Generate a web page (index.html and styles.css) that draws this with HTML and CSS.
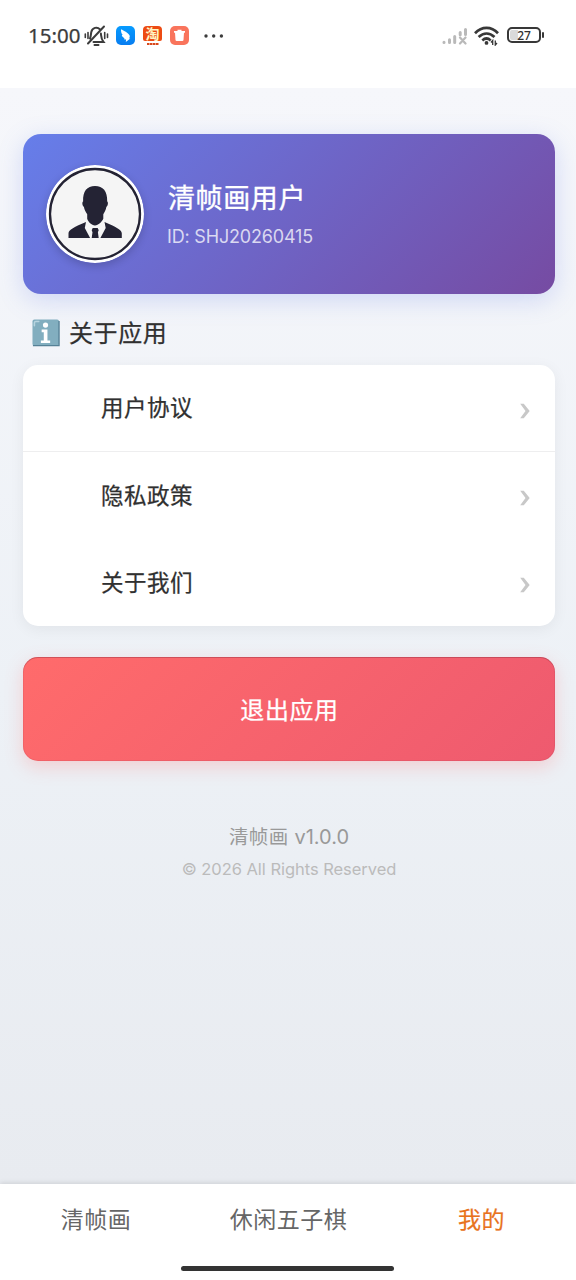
FILE: index.html
```html
<!DOCTYPE html>
<html lang="zh-CN">
<head>
<meta charset="utf-8">
<title>我的</title>
<link rel="stylesheet" href="styles.css">
</head>
<body>
<header class="status">
  <span class="clock">15:00</span>
  <svg class="mute" width="25" height="22" viewBox="0 0 25 22" fill="none" stroke="#3c3c3c" stroke-width="2" stroke-linecap="round">
    <path d="M9.500 17h10c-2.500-3-2.200-5-2.600-8.500M6 13.500c1-2 .8-4 1.300-6.500.9-4.500 6-5.500 8.500-2.800M10.500 20h4M20 1.500L4 18.500"/>
    <path stroke-width="1.600" d="M4 7.500v6M1.300 9v3.500M20.700 7.500v6M23.500 9v3.500"/>
  </svg>
  <svg class="app-bird" width="19" height="19" viewBox="0 0 19 19">
    <defs><linearGradient id="blue" x1="0" y1="0" x2="0" y2="1"><stop offset="0" stop-color="#069bff"/><stop offset="1" stop-color="#087df0"/></linearGradient></defs>
    <rect width="19" height="19" rx="5" fill="url(#blue)"/>
    <path fill="#fff" d="M5 3.200c2.500 1.300 8.200 3.800 8.800 6.800.1 1-.3 1.800-.7 2.500h1.200L9.800 16l.3-2.500-2.300-.3.800-1C6.800 11.300 6 10.200 5.800 9l1 .1C5.500 7.800 4.800 5.300 5 3.200z"/>
  </svg>
  <span class="app-tao"><b>淘</b><i></i></span>
  <svg class="app-bin" width="19" height="19" viewBox="0 0 19 19">
    <rect width="19" height="19" rx="5" fill="#f9745c"/>
    <path fill="#fff" d="M4 5h3.500V3.700h4V5H15v1.700H4zM5 6.500h9l-.5 7.500q-.1 1-1.200 1H6.700q-1.100 0-1.200-1z"/>
  </svg>
  <svg class="dots" width="20" height="4" viewBox="0 0 20 4" fill="#3c3c3c"><circle cx="2" cy="2" r="1.700"/><circle cx="9.700" cy="2" r="1.700"/><circle cx="17.400" cy="2" r="1.700"/></svg>
  <svg class="signal" width="27" height="18" viewBox="0 0 27 18" fill="none" stroke="#b9b9b9" stroke-width="3" stroke-linecap="round">
    <path d="M2 15.200v.3M7.500 12.700v2.800M12.700 9.500v6M18.200 5.500v2.300M23.500 2.500v5"/>
    <path stroke-width="2.200" d="M18 10.500l5.500 6M23.500 10.500l-5.500 6"/>
  </svg>
  <svg class="wifi" width="26" height="20" viewBox="0 0 26 20" fill="none" stroke="#383838" stroke-width="2.700">
    <path d="M1 7.200C7.800.2 17.300.2 24 7.200M4.600 11c5-4.700 11-4.700 15.900 0M8.300 14.400c2.800-2.500 5.600-2.500 8.400 0"/>
    <circle cx="12.500" cy="16.900" r="1.900" fill="#383838" stroke="none"/>
    <path stroke-width="1.300" d="M18.700 19v-4.500l-1.700 2M21.300 14.500V19l1.700-2"/>
  </svg>
  <span class="battery"><span class="level">27</span></span>
</header>

<main class="page">
  <section class="profile">
    <svg class="avatar" width="98" height="98" viewBox="0 0 98 98">
      <circle cx="49" cy="49" r="49" fill="#fff"/>
      <circle cx="49" cy="49" r="45" fill="#f5f5f5" stroke="#242334" stroke-width="2.300"/>
      <path fill="#242334" d="M49 21c8 0 12.500 5 12.200 15.500 1.300.4.800 4.800-.8 5.200-.5 3.300-1.700 5-3.100 7.500v4.600c-1.500 3-4.800 6.700-8.300 6.700s-6.800-3.700-7.800-6.700v-4.600c-1.600-2.500-2.800-4.200-3.300-7.500-1.600-.4-2.100-4.800-.8-5.200C36.700 26 41 21 49 21z"/>
      <path fill="#242334" d="M40 57l-1.200 6 5.300 10H22.500v-4.500c0-3.800 6-6.500 17.500-11.500zM58.500 57l1.200 6-5.300 10h21.400v-4.500c0-3.800-6-6.500-17.300-11.500zM46.700 63h5l1 2.200-.8 2 .8 5.800h-7l.8-5.800-.8-2z"/>
    </svg>
    <div class="who">
      <h1 class="name">清帧画用户</h1>
      <p class="uid">ID: SHJ20260415</p>
    </div>
  </section>

  <h2 class="heading">
    <svg width="28" height="28" viewBox="0 0 29 29">
      <rect x=".5" y=".5" width="27.500" height="27.500" rx="2" fill="#82aebf"/>
      <path d="M1 27.500h27V2" fill="none" stroke="#558196" stroke-width="1.400"/>
      <path d="M2.500 7V4q0-1.500 1.500-1.500h3" fill="none" stroke="#b7d4df" stroke-width="1.600" stroke-linecap="round"/>
      <circle cx="14" cy="6.300" r="2.700" fill="#fff"/>
      <path fill="#fff" d="M10 11h6v11.200h2.800v2.600H9.200v-2.600h3v-8.600H10z"/>
    </svg>
    <span>关于应用</span>
  </h2>

  <ul class="menu">
    <li class="item ruled"><span>用户协议</span><svg class="chevron" width="10" height="16" viewBox="0 0 10 16"><path d="M.2.800h3.600L9.700 8l-5.900 7.200H.2L5.500 8z"/></svg></li>
    <li class="item"><span>隐私政策</span><svg class="chevron" width="10" height="16" viewBox="0 0 10 16"><path d="M.2.800h3.600L9.700 8l-5.900 7.200H.2L5.500 8z"/></svg></li>
    <li class="item"><span>关于我们</span><svg class="chevron" width="10" height="16" viewBox="0 0 10 16"><path d="M.2.800h3.600L9.700 8l-5.900 7.200H.2L5.500 8z"/></svg></li>
  </ul>

  <button class="quit">退出应用</button>

  <footer class="about">
    <p class="version">清帧画 <span>v1.0.0</span></p>
    <p class="rights">© 2026 All Rights Reserved</p>
  </footer>
</main>

<nav class="tabs">
  <div class="tab-row">
    <a class="tab">清帧画</a>
    <a class="tab">休闲五子棋</a>
    <a class="tab active">我的</a>
  </div>
  <div class="home-bar"></div>
</nav>
</body>
</html>
```
FILE: styles.css
```css
* { box-sizing: border-box; margin: 0; padding: 0; }
svg { display: block; flex: none; }
body {
  width: 576px;
  height: 1280px;
  display: flex;
  flex-direction: column;
  overflow: hidden;
  background: #fff;
  color: #303030;
  font-family: Inter, "Noto Sans CJK SC", sans-serif;
}
.status {
  height: 88px;
  flex: none;
  display: flex;
  align-items: flex-start;
  padding: 25px 35px 0 28px;
}
.clock {
  width: 56px;
  font: 400 20.500px/21px "Noto Sans", sans-serif;
  -webkit-text-stroke: .25px currentColor;
  color: #3c3c3c;
}
.mute { margin-right: 7px; }
.app-bird { margin: 1px 8px 0 0; }
.app-tao {
  width: 19px;
  height: 19px;
  margin: 1px 8px 0 0;
  display: flex;
  flex-direction: column;
  align-items: center;
}
.app-tao b {
  width: 19px;
  height: 15px;
  border-radius: 4px 4px 2px 2px;
  background: #ed4b13;
  color: #fff5c4;
  font: 700 14px/14px "Noto Sans CJK SC", sans-serif;
  text-align: center;
}
.app-tao i {
  width: 12px;
  height: 2px;
  margin-top: 2px;
  background: repeating-linear-gradient(90deg, #d7481c 0 2px, #f0a184 2px 3px);
}
.app-bin { margin: 1px 15px 0 0; }
.dots { margin-top: 9px; }
.signal { margin: 2px 5px 0 auto; }
.wifi { margin: 1px 7px 0 0; }
.battery {
  position: relative;
  width: 34px;
  height: 16px;
  margin-top: 2px;
  border: 2px solid #383838;
  border-radius: 5px;
  background: linear-gradient(90deg, #dadada 9px, #fff 9px);
  background-origin: content-box;
  box-shadow: inset 0 0 0 1px #fff;
}
.battery::after {
  content: "";
  position: absolute;
  right: -5px;
  top: 3px;
  width: 2px;
  height: 6px;
  border-radius: 1px;
  background: #383838;
}
.level {
  display: block;
  text-align: center;
  font: 500 12px/13px "Noto Sans", sans-serif;
  color: #303030;
}
.page {
  flex: 1;
  padding: 46px 21px 0 23px;
  background: linear-gradient(180deg, #f6f7fb 0%, #edf1f6 55%, #e8ebf0 100%);
}
.profile {
  height: 160px;
  display: flex;
  align-items: center;
  padding: 0 23px;
  border-radius: 18px;
  background: linear-gradient(135deg, #667eea 0%, #764ba2 100%);
  box-shadow: 0 6px 24px rgba(102, 126, 234, .25);
}
.avatar {
  border-radius: 50%;
  box-shadow: 0 3px 9px rgba(0, 0, 0, .18);
}
.who { margin-left: 24px; padding-top: 4px; color: #fff; }
.name {
  font-size: 27px;
  font-weight: 400;
  -webkit-text-stroke: .35px currentColor;
  line-height: 36px;
  letter-spacing: .6px;
}
.uid {
  margin: 8px 0 3px -1px;
  font-size: 18px;
  line-height: 24px;
  letter-spacing: -.18px;
  color: rgba(255, 255, 255, .75);
}
.heading {
  display: flex;
  align-items: center;
  height: 71px;
  padding: 7px 0 0 9px;
  gap: 9px;
  font-size: 24px;
  font-weight: 400;
  letter-spacing: .6px;
}
.heading span { margin-bottom: 4px; }
.heading span, .item span, .quit { -webkit-text-stroke: .25px currentColor; }
.menu {
  list-style: none;
  height: 261px;
  border-radius: 15px;
  background: #fff;
  box-shadow: 0 3px 15px rgba(0, 0, 0, .06);
}
.item {
  height: 87px;
  display: flex;
  align-items: center;
  justify-content: space-between;
  padding: 0 25px 0 78px;
  font-size: 22.500px;
  letter-spacing: .5px;
}
.item span { margin-bottom: 4px; }
.ruled { border-bottom: 1px solid #eeeeef; }
.chevron { margin-top: 5px; fill: #c8c8c8; }
.quit {
  display: block;
  width: 100%;
  height: 104px;
  margin-top: 31px;
  padding: 0 0 2px 1px;
  border: 0;
  border-radius: 15px;
  background: linear-gradient(135deg, #ff6b6b 0%, #ee5a6f 100%);
  box-shadow: inset 0 0 0 1px rgba(150, 40, 60, .1), inset 0 1px 0 rgba(130, 40, 60, .3), 0 6px 18px rgba(255, 107, 107, .25);
  color: #fff;
  font-family: inherit;
  font-size: 24px;
  font-weight: 400;
  letter-spacing: .6px;
}
.about { padding-top: 61px; text-align: center; }
.version {
  font-size: 19.500px;
  line-height: 30px;
  letter-spacing: .4px;
  color: #999;
}
.version span { letter-spacing: 0; font-size: 20px; }
.rights {
  margin-top: 4px;
  font-size: 16.500px;
  line-height: 26px;
  letter-spacing: -.04px;
  color: #bbb;
}
.tabs {
  position: relative;
  height: 96px;
  flex: none;
  background: #fff;
  box-shadow: 0 -1px 5px rgba(0, 0, 0, .12);
}
.tab-row { display: grid; grid-template-columns: 192px 193px 193px; }
.tab {
  height: 73px;
  line-height: 73px;
  font-size: 23px;
  letter-spacing: .5px;
  text-align: center;
  color: #666;
}
.active { color: #e8731d; -webkit-text-stroke: .2px currentColor; }
.home-bar {
  width: 213px;
  height: 5px;
  margin: 9px 0 0 181px;
  border-radius: 3px;
  background: #333;
}
```
